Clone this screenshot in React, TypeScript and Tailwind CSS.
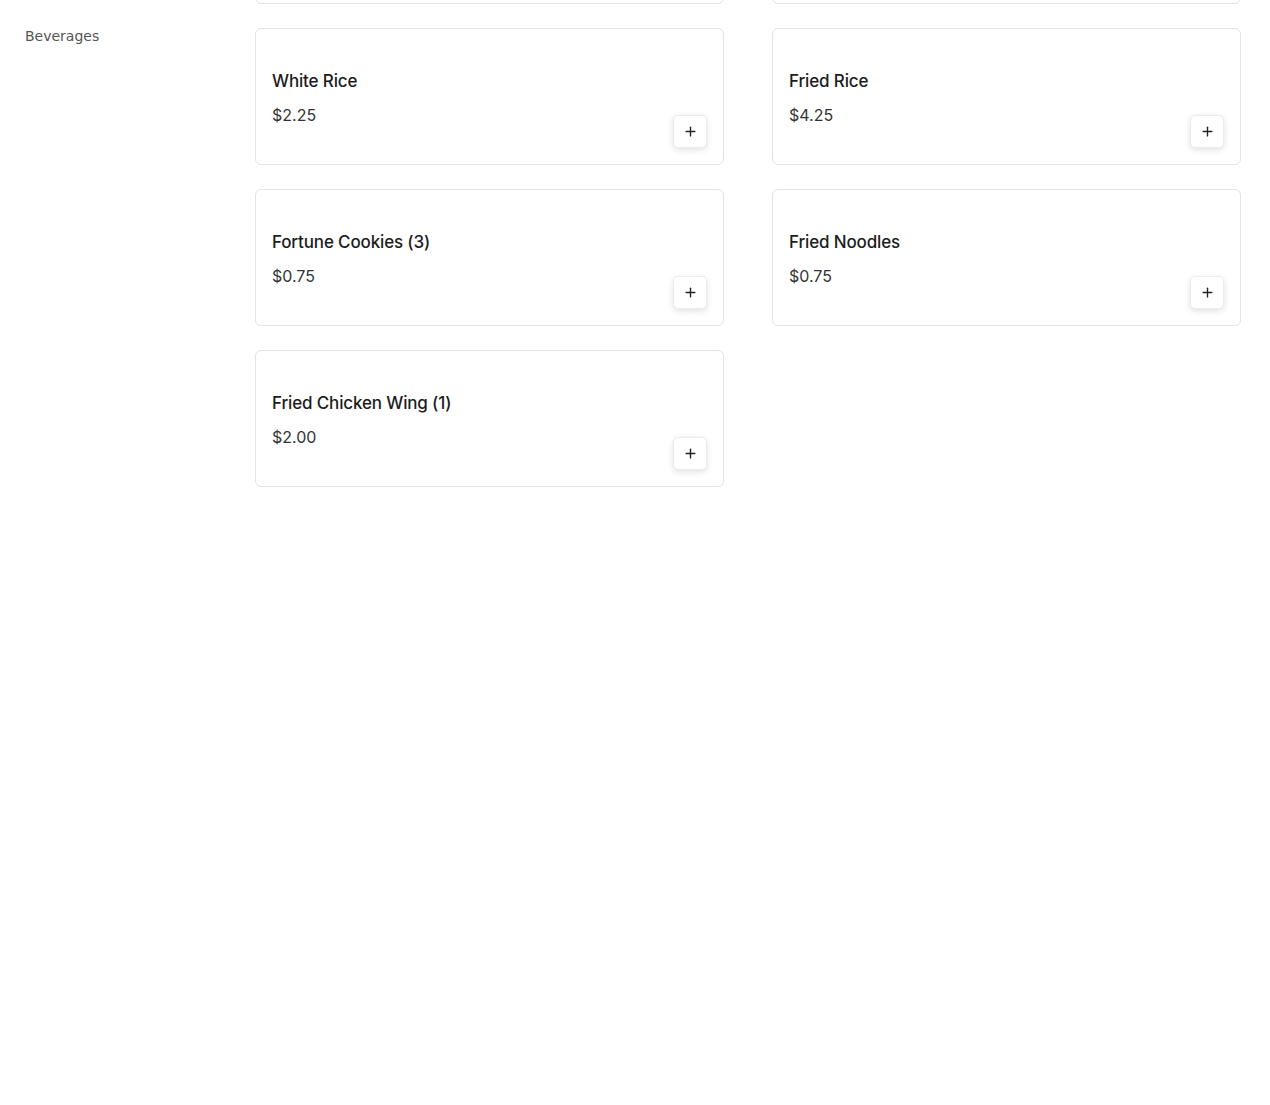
import React from "react";
import { Plus } from "lucide-react";

const items: { name: string; price: string }[] = [
  { name: "White Rice", price: "$2.25" },
  { name: "Fried Rice", price: "$4.25" },
  { name: "Fortune Cookies (3)", price: "$0.75" },
  { name: "Fried Noodles", price: "$0.75" },
  { name: "Fried Chicken Wing (1)", price: "$2.00" },
];

function Card({ name, price }: { name?: string; price?: string }) {
  return (
    <div className="h-[137px] rounded-[6px] border border-[#e3e3e3] bg-white p-4 flex justify-between items-end">
      <div className="flex flex-col self-stretch pt-[24px]">
        {name && (
          <div className="text-[17px] leading-[24px] font-medium text-[#1c1c1c] tracking-[-0.15px]" style={{ fontFamily: "Inter, 'Noto Sans', sans-serif" }}>
            {name}
          </div>
        )}
        {price && (
          <div className="mt-[10px] text-[16px] leading-[24px] text-[#333333]" style={{ fontFamily: "Inter, 'Noto Sans', sans-serif" }}>
            {price}
          </div>
        )}
      </div>
      <button className="w-[34px] h-[33px] rounded-[5px] border border-[#ececec] bg-white shadow-[0_2px_6px_rgba(0,0,0,0.12)] flex items-center justify-center text-[#222]">
        <Plus size={15} strokeWidth={2.2} />
      </button>
    </div>
  );
}

export default function App() {
  return (
    <div className="w-[1270px] h-[1105px] bg-white overflow-hidden flex">
      <aside className="w-[255px] shrink-0 pl-[25px] pt-[26px]">
        <div className="text-[14px] leading-[20px] text-[#555555]" style={{ fontFamily: "'DejaVu Sans', sans-serif" }}>
          Beverages
        </div>
      </aside>
      <main className="w-[986px] shrink-0 mt-[-133px] grid grid-cols-2 gap-x-[48px] gap-y-[24px] content-start">
        <Card />
        <Card />
        {items.map((it) => (
          <Card key={it.name} name={it.name} price={it.price} />
        ))}
      </main>
    </div>
  );
}
